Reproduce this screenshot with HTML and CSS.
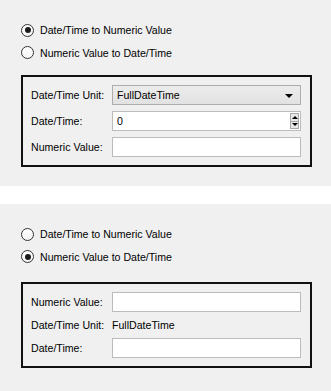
FILE: index.html
```html
<!DOCTYPE html>
<html lang="en">
<head>
    <meta charset="UTF-8">
    <meta name="viewport" content="width=device-width, initial-scale=1.0">
    <title>Date/Time Conversion</title>
    <link rel="stylesheet" href="styles.css">
</head>
<body>
    <div class="panel panel-first">
        <div class="options">
            <label class="radio checked"><span class="circle"></span>Date/Time to Numeric Value</label>
            <label class="radio"><span class="circle"></span>Numeric Value to Date/Time</label>
        </div>
        <div class="group">
            <div class="row">
                <span class="label">Date/Time Unit:</span>
                <div class="combo">FullDateTime<span class="arrow"></span></div>
            </div>
            <div class="row">
                <span class="label">Date/Time:</span>
                <div class="field spin">0
                    <span class="spin-buttons">
                        <span class="spin-up"></span>
                        <span class="spin-down"></span>
                    </span>
                </div>
            </div>
            <div class="row">
                <span class="label">Numeric Value:</span>
                <div class="field"></div>
            </div>
        </div>
    </div>

    <div class="panel panel-second">
        <div class="options">
            <label class="radio"><span class="circle"></span>Date/Time to Numeric Value</label>
            <label class="radio checked"><span class="circle"></span>Numeric Value to Date/Time</label>
        </div>
        <div class="group">
            <div class="row">
                <span class="label">Numeric Value:</span>
                <div class="field"></div>
            </div>
            <div class="row row-text">
                <span class="label">Date/Time Unit:</span>
                <span class="value">FullDateTime</span>
            </div>
            <div class="row">
                <span class="label">Date/Time:</span>
                <div class="field"></div>
            </div>
        </div>
    </div>
</body>
</html>
```

FILE: styles.css
```css
body {
    margin: 0;
    background: #ffffff;
    font-family: "Liberation Sans", Arial, sans-serif;
    font-size: 10.6px;
    color: #000;
}
.panel {
    background: #f0f0f0;
    padding: 19px 19px 0 21px;
    box-sizing: border-box;
}
.panel-first {
    height: 186px;
    margin-bottom: 18px;
}
.panel-second {
    height: 187px;
    padding-top: 19px;
}
.options {
    display: flex;
    flex-direction: column;
}
.radio {
    display: flex;
    align-items: center;
    height: 22.5px;
}
.circle {
    width: 11px;
    height: 11px;
    border: 1px solid #333;
    border-radius: 50%;
    background: linear-gradient(#ffffff, #f4f4f4);
    margin-right: 6px;
    position: relative;
}
.checked .circle::after {
    content: "";
    position: absolute;
    left: 2.5px;
    top: 2.5px;
    width: 6px;
    height: 6px;
    border-radius: 50%;
    background: #1a1a1a;
}
.group {
    margin-top: 11px;
    border: 2px solid #111;
    padding: 8px 9px 8px 8px;
    display: flex;
    flex-direction: column;
    gap: 6px;
}
.panel-second .group {
    margin-top: 14px;
}
.row {
    display: flex;
    align-items: center;
    height: 20px;
}
.row-text {
    height: 14px;
}
.label {
    width: 81px;
    flex: none;
}
.combo, .field {
    flex: 1;
    height: 20px;
    box-sizing: border-box;
    border: 1px solid #b4b4b4;
    padding: 0 4px;
    display: flex;
    align-items: center;
    position: relative;
}
.combo {
    background: linear-gradient(#ececec, #e2e2e2);
    border-color: #adadad;
}
.field {
    background: #fff;
    border-width: 1.5px;
    border-color: #bcbcbc;
}
.arrow {
    position: absolute;
    right: 7px;
    top: 8px;
    width: 0;
    height: 0;
    border-left: 4px solid transparent;
    border-right: 4px solid transparent;
    border-top: 4px solid #000;
}
.spin-buttons {
    position: absolute;
    right: 1px;
    top: 1px;
    bottom: 1px;
    width: 7px;
    display: flex;
    flex-direction: column;
    border: 1px solid #a8a8a8;
    background: #e8e8e8;
}
.spin-up, .spin-down {
    flex: 1;
    display: flex;
    align-items: center;
    justify-content: center;
}
.spin-up {
    border-bottom: 1px solid #a8a8a8;
}
.spin-up::before {
    content: "";
    border-left: 3px solid transparent;
    border-right: 3px solid transparent;
    border-bottom: 3px solid #000;
}
.spin-down::before {
    content: "";
    border-left: 3px solid transparent;
    border-right: 3px solid transparent;
    border-top: 3px solid #000;
}
```
